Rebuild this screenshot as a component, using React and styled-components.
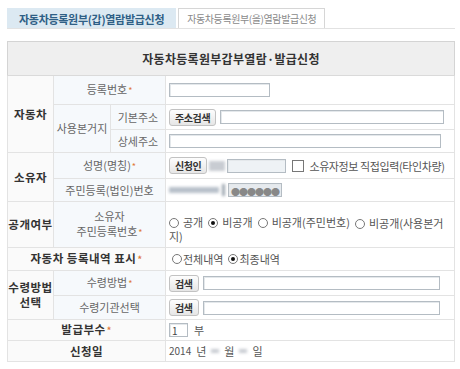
import styled, { createGlobalStyle } from "styled-components";

const Global = createGlobalStyle`
  body {
    margin: 0;
    background: #fff;
    font-family: "Noto Sans CJK KR", "Noto Sans", sans-serif;
    font-size: 11px;
    color: #555;
  }
`;

const Page = styled.div`
  width: 460px;
  height: 369px;
  padding: 8px 5px 0 7px;
  box-sizing: border-box;
`;

const Tabs = styled.div`
  display: flex;
  gap: 2px;
  height: 20px;
  border-bottom: 1px solid #e2e2e2;
`;

const Tab = styled.div`
  display: flex;
  align-items: center;
  padding: 0 ${(p) => (p.$active ? "11px" : "8px")};
  font-size: ${(p) => (p.$active ? "11px" : "10px")};
  font-weight: ${(p) => (p.$active ? 700 : 400)};
  letter-spacing: ${(p) => (p.$active ? "-0.3px" : "-0.4px")};
  color: ${(p) => (p.$active ? "#2f5f86" : "#8a8a8a")};
  background: ${(p) => (p.$active ? "#dce9f2" : "#fff")};
  border: 1px solid ${(p) => (p.$active ? "#dce9f2" : "#d6d6d6")};
  border-bottom: none;
`;

const Table = styled.table`
  margin-top: 12px;
  width: 448px;
  border-collapse: collapse;
  border: 1px solid #d4d4d4;
  table-layout: fixed;
`;

const TitleCell = styled.th`
  height: 31px;
  background: #efefef;
  color: #333;
  font-size: 12px;
  font-weight: 700;
  letter-spacing: 0.3px;
  border-bottom: 1px solid #dadada;
`;

const Row = styled.tr`
  height: ${(p) => p.$h}px;
`;

const Head = styled.td`
  text-align: center;
  vertical-align: middle;
  border: 1px solid #e3e3e3;
  background: ${(p) => (p.$main ? "#fafafa" : "#f6f9fc")};
  color: ${(p) => (p.$main ? "#333" : "#666")};
  font-weight: ${(p) => (p.$main ? 700 : 400)};
  font-size: ${(p) => (p.$main ? "11.5px" : "11px")};
  letter-spacing: ${(p) => (p.$main ? "0.5px" : "0")};
  line-height: 15px;
  padding: 0;
`;

const Value = styled.td`
  border: 1px solid #e3e3e3;
  padding: 0 3px;
  vertical-align: middle;
  line-height: 14px;
`;

const Line = styled.div`
  display: flex;
  align-items: center;
  gap: ${(p) => p.$gap ?? 4}px;
`;

const Star = styled.span`
  color: #e07a3a;
  font-size: 9px;
  margin-left: 1px;
`;

const Input = styled.div`
  width: ${(p) => p.$w}px;
  height: 14px;
  border: 1px solid #b4bcc3;
  box-shadow: inset 1px 1px 0 #e4e8eb;
  background: ${(p) => p.$bg || "#fff"};
  flex: none;
  font-size: 10px;
  line-height: 14px;
  padding-left: 2px;
  box-sizing: border-box;
  color: #444;
`;

const Btn = styled.div`
  height: 15px;
  padding: 0 5px;
  border: 1px solid #c2c2c2;
  border-radius: 3px;
  background: linear-gradient(#fdfdfd, #e6e6e6);
  color: #333;
  font-size: 10px;
  font-weight: 700;
  line-height: 15px;
  letter-spacing: -0.4px;
  flex: none;
`;

const Blur = styled.span`
  display: inline-block;
  width: ${(p) => p.$w}px;
  height: ${(p) => p.$h || 8}px;
  background: ${(p) => p.$c || "#c8ccd2"};
  filter: blur(1.5px);
  flex: none;
`;

const Radio = styled.span`
  display: inline-block;
  width: 10px;
  height: 10px;
  border: 1px solid #777;
  border-radius: 50%;
  box-sizing: border-box;
  position: relative;
  flex: none;
  margin-right: ${(p) => p.$mr ?? 4}px;
  vertical-align: -1px;
  background: #fff;
  &::after {
    content: "";
    display: ${(p) => (p.$on ? "block" : "none")};
    position: absolute;
    left: 2px;
    top: 2px;
    width: 4px;
    height: 4px;
    border-radius: 50%;
    background: #111;
  }
`;

const Check = styled.span`
  display: inline-block;
  width: 10px;
  height: 10px;
  border: 1px solid #777;
  flex: none;
  margin: 0 3px 0 4px;
`;

const Opt = styled.span`
  display: inline-flex;
  align-items: center;
  margin-right: 5px;
  white-space: nowrap;
  color: #555;
`;

const Wrap = styled.div`
  padding: 10px 0 0 3px;
  line-height: 13px;
  color: #555;
`;

const Dots = styled.span`
  color: #888;
  font-size: 9px;
  letter-spacing: -1px;
`;

const Note = styled.span`
  letter-spacing: -0.4px;
  white-space: nowrap;
`;

const Year = styled.span`
  font-size: 10px;
`;

export default function App() {
  return (
    <Page>
      <Global />
      <Tabs>
        <Tab $active>자동차등록원부(갑)열람발급신청</Tab>
        <Tab>자동차등록원부(을)열람발급신청</Tab>
      </Tabs>
      <Table>
        <colgroup>
          <col style={{ width: 46 }} />
          <col style={{ width: 57 }} />
          <col style={{ width: 55 }} />
          <col />
        </colgroup>
        <tbody>
          <tr>
            <TitleCell colSpan={4}>자동차등록원부갑부열람·발급신청</TitleCell>
          </tr>
          <Row $h={29}>
            <Head $main rowSpan={3}>자동차</Head>
            <Head colSpan={2}>등록번호<Star>*</Star></Head>
            <Value>
              <Input $w={101} />
            </Value>
          </Row>
          <Row $h={25}>
            <Head rowSpan={2}>사용본거지</Head>
            <Head>기본주소</Head>
            <Value>
              <Line>
                <Btn>주소검색</Btn>
                <Input $w={224} />
              </Line>
            </Value>
          </Row>
          <Row $h={23}>
            <Head>상세주소</Head>
            <Value>
              <Input $w={272} />
            </Value>
          </Row>
          <Row $h={26}>
            <Head $main rowSpan={2}>소유자</Head>
            <Head colSpan={2}>성명(명칭)<Star>*</Star></Head>
            <Value>
              <Line $gap={2}>
                <Btn>신청인</Btn>
                <Blur $w={16} $h={10} />
                <Input $w={59} $bg="#eef2f5" />
                <Check />
                <Note>소유자정보 직접입력(타인차량)</Note>
              </Line>
            </Value>
          </Row>
          <Row $h={23}>
            <Head colSpan={2}>주민등록(법인)번호</Head>
            <Value>
              <Line $gap={3}>
                <Blur $w={50} $h={6} $c="#b8c0ca" />
                <Blur $w={3} $h={12} $c="#9aa4ae" />
                <Input $w={54} $bg="#e6eaee">
                  <Dots>●●●●●●</Dots>
                </Input>
              </Line>
            </Value>
          </Row>
          <Row $h={46}>
            <Head $main>공개여부</Head>
            <Head colSpan={2}>
              소유자
              <br />
              주민등록번호<Star>*</Star>
            </Head>
            <Value style={{ padding: 0 }}>
              <Wrap>
                <Opt><Radio />공개</Opt>
                <Opt><Radio $on />비공개</Opt>
                <Opt><Radio />비공개(주민번호)</Opt>
                <Radio />
                비공개(사용본거지)
              </Wrap>
            </Value>
          </Row>
          <Row $h={23}>
            <Head $main colSpan={3}>자동차 등록내역 표시<Star>*</Star></Head>
            <Value>
              <Line $gap={0}>
                <Radio $mr={1} style={{ marginLeft: 3 }} />
                <Opt>전체내역</Opt>
                <Radio $on $mr={1} />
                <span>최종내역</span>
              </Line>
            </Value>
          </Row>
          <Row $h={25}>
            <Head $main rowSpan={2}>
              수령방법
              <br />
              선택
            </Head>
            <Head colSpan={2}>수령방법<Star>*</Star></Head>
            <Value>
              <Line>
                <Btn>검색</Btn>
                <Input $w={237} />
              </Line>
            </Value>
          </Row>
          <Row $h={24}>
            <Head colSpan={2}>수령기관선택</Head>
            <Value>
              <Line>
                <Btn>검색</Btn>
                <Input $w={237} />
              </Line>
            </Value>
          </Row>
          <Row $h={21}>
            <Head $main colSpan={3}>발급부수<Star>*</Star></Head>
            <Value>
              <Line $gap={6}>
                <Input $w={19}>1</Input>
                <span>부</span>
              </Line>
            </Value>
          </Row>
          <Row $h={21}>
            <Head $main colSpan={3}>신청일</Head>
            <Value>
              <Line $gap={5}>
                <Year>2014</Year>
                <span>년</span>
                <Blur $w={8} $h={4} />
                <span>월</span>
                <Blur $w={8} $h={4} />
                <span>일</span>
              </Line>
            </Value>
          </Row>
        </tbody>
      </Table>
    </Page>
  );
}
